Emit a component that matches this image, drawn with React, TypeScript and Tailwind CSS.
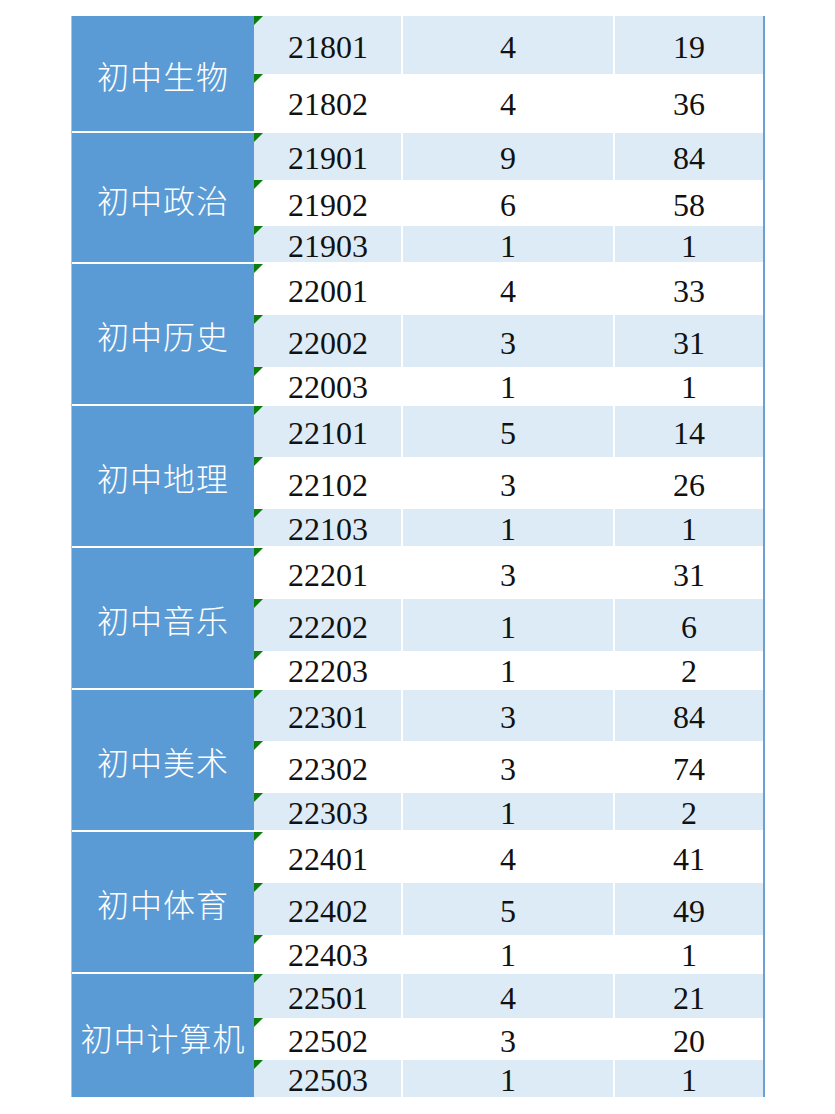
const groups = [
  {
    name: "初中生物",
    rows: [
      { code: "21801", a: "4", b: "19", h: 58 },
      { code: "21802", a: "4", b: "36", h: 57 },
    ],
  },
  {
    name: "初中政治",
    rows: [
      { code: "21901", a: "9", b: "84", h: 47 },
      { code: "21902", a: "6", b: "58", h: 46 },
      { code: "21903", a: "1", b: "1", h: 36 },
    ],
  },
  {
    name: "初中历史",
    rows: [
      { code: "22001", a: "4", b: "33", h: 51 },
      { code: "22002", a: "3", b: "31", h: 52 },
      { code: "22003", a: "1", b: "1", h: 37 },
    ],
  },
  {
    name: "初中地理",
    rows: [
      { code: "22101", a: "5", b: "14", h: 51 },
      { code: "22102", a: "3", b: "26", h: 52 },
      { code: "22103", a: "1", b: "1", h: 37 },
    ],
  },
  {
    name: "初中音乐",
    rows: [
      { code: "22201", a: "3", b: "31", h: 51 },
      { code: "22202", a: "1", b: "6", h: 52 },
      { code: "22203", a: "1", b: "2", h: 37 },
    ],
  },
  {
    name: "初中美术",
    rows: [
      { code: "22301", a: "3", b: "84", h: 51 },
      { code: "22302", a: "3", b: "74", h: 52 },
      { code: "22303", a: "1", b: "2", h: 37 },
    ],
  },
  {
    name: "初中体育",
    rows: [
      { code: "22401", a: "4", b: "41", h: 51 },
      { code: "22402", a: "5", b: "49", h: 52 },
      { code: "22403", a: "1", b: "1", h: 37 },
    ],
  },
  {
    name: "初中计算机",
    rows: [
      { code: "22501", a: "4", b: "21", h: 44 },
      { code: "22502", a: "3", b: "20", h: 42 },
      { code: "22503", a: "1", b: "1", h: 37 },
    ],
  },
];

// serif digits like the spreadsheet's SimSun figures
const num = "font-['Liberation_Serif'] text-[32px] leading-none text-[#111]";

export default function App() {
  let idx = 0;
  return (
    <div className="w-[835px] h-[1114px] bg-white pt-[16px] pl-[71px] overflow-hidden">
      <div className="w-[694px] flex flex-col gap-[2px] border-l border-l-[#a8c3e3] border-r-2 border-r-[#6b9fd6]">
        {groups.map((g) => (
          <div key={g.name} className="flex">
            <div className="w-[182px] shrink-0 bg-[#5b9bd5] flex items-center justify-center">
              <span className="font-['Noto_Sans_CJK_SC'] font-light text-[32px] tracking-[1px] text-white leading-none pt-[2px]">
                {g.name}
              </span>
            </div>
            <div className="flex-1 flex flex-col">
              {g.rows.map((r) => {
                const shaded = idx++ % 2 === 0;
                const bg = shaded ? "bg-[#ddebf7]" : "bg-white";
                return (
                  <div
                    key={r.code}
                    className="grid grid-cols-[147px_210px_148px] gap-x-[2px] bg-white"
                    style={{ height: r.h }}
                  >
                    <div className={`relative ${bg} flex items-center pl-[34px] pt-[3px]`}>
                      <div className="absolute left-0 top-0 w-0 h-0 border-t-[9px] border-t-[#0b7d0b] border-r-[9px] border-r-transparent" />
                      <span className={num}>{r.code}</span>
                    </div>
                    <div className={`${bg} flex items-center justify-center pt-[3px]`}>
                      <span className={num}>{r.a}</span>
                    </div>
                    <div className={`${bg} flex items-center justify-center pt-[3px]`}>
                      <span className={num}>{r.b}</span>
                    </div>
                  </div>
                );
              })}
            </div>
          </div>
        ))}
      </div>
    </div>
  );
}
